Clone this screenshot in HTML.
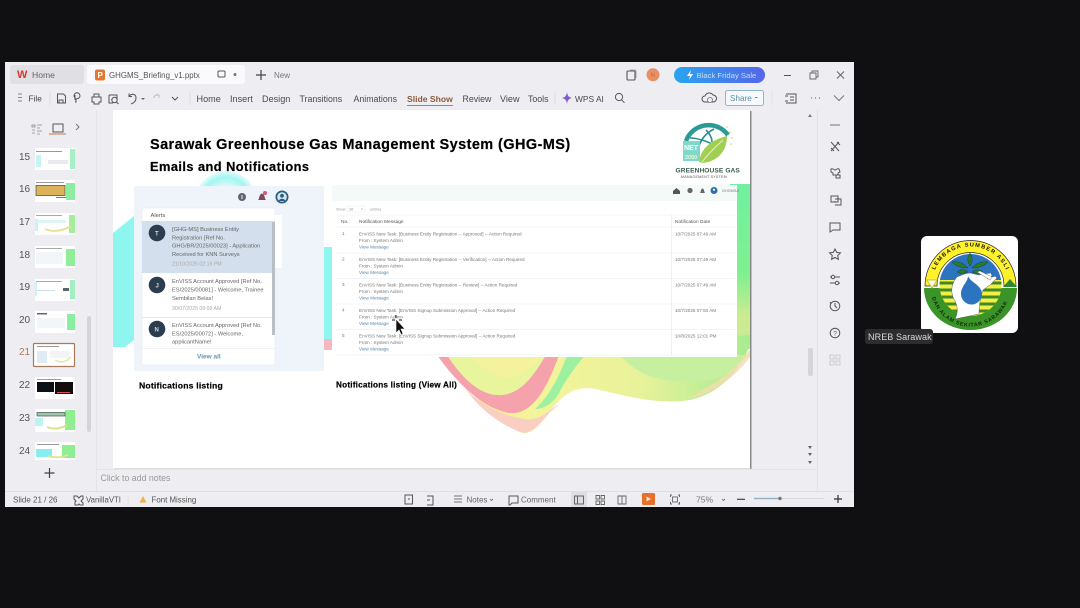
<!DOCTYPE html>
<html lang="en">
<head>
<meta charset="utf-8">
<title>GHGMS Briefing</title>
<style>
html,body{margin:0;padding:0;width:1080px;height:608px;overflow:hidden;background:#101013}
svg{display:block;position:absolute;left:0;top:0;filter:blur(.3px)}
text{font-family:"Liberation Sans",sans-serif}
.tb{font-size:9.1px;fill:#4a4a4a}
.ic{fill:none;stroke:#555;stroke-width:1}
.num{font-size:10px;fill:#555}
.msg{font-size:4.6px;fill:#777}
.lnk{font-size:4.6px;fill:#5b84a8}
.alert{font-size:5.7px;fill:#666}
.dt{font-size:5.2px;fill:#aaa}
.hd{font-weight:bold;fill:#000;stroke:#000;stroke-width:.2}
</style>
</head>
<body>
<svg width="1080" height="608" viewBox="0 0 1080 608" xmlns="http://www.w3.org/2000/svg">
<defs>
<linearGradient id="sale" x1="0" x2="1"><stop offset="0" stop-color="#2aa4f0"/><stop offset="1" stop-color="#5566e8"/></linearGradient>
<linearGradient id="grn" x1="0" x2="0" y1="0" y2="1"><stop offset="0" stop-color="#70f0a0"/><stop offset=".55" stop-color="#80f090"/><stop offset=".8" stop-color="#cdeb90"/><stop offset="1" stop-color="#c8e89a"/></linearGradient>
<linearGradient id="wave" x1="0" x2="1" y1="0" y2="0"><stop offset="0" stop-color="#f9e29a"/><stop offset=".3" stop-color="#f4f49a"/><stop offset=".65" stop-color="#e8f29a"/><stop offset="1" stop-color="#a8ec90"/></linearGradient>
<radialGradient id="cy"><stop offset=".45" stop-color="#e4fbfa"/><stop offset=".8" stop-color="#a2f6f1"/><stop offset="1" stop-color="#e4fcfb"/></radialGradient>
<clipPath id="slideClip"><rect x="113" y="110" width="637" height="358"/></clipPath>
<clipPath id="logoClip"><rect x="921" y="236" width="97" height="97" rx="6"/></clipPath>
<clipPath id="dd"><rect x="142" y="208" width="133" height="157" rx="2"/></clipPath>
<clipPath id="inner"><circle cx="970.500" cy="285" r="31"/></clipPath>
<path id="arcTop2" d="M935 270A38.500 38.500 0 0 1 1006 270" fill="none"/>
<path id="arcBot2" d="M932 297.500A40 40 0 0 0 1009 297.500" fill="none"/>
</defs>

<!-- window -->
<rect x="5" y="62" width="849" height="445" fill="#eeeef2"/>
<rect x="10" y="65" width="74" height="19" rx="3" fill="#dfdfe4"/>
<rect x="87" y="65" width="158" height="19" rx="3" fill="#fafafc"/>
<text x="17" y="78" font-size="11" font-weight="bold" fill="#d9372c">W</text>
<text x="32" y="78" font-size="8.600" fill="#666">Home</text>
<rect x="95" y="69.500" width="10" height="11" rx="2" fill="#e2792e"/>
<text x="97.500" y="78" font-size="8" font-weight="bold" fill="#fff">P</text>
<text x="109" y="78" font-size="7.900" fill="#555">GHGMS_Briefing_v1.pptx</text>
<rect x="218" y="71" width="7" height="6" rx="1" class="ic" stroke="#888"/>
<circle cx="235" cy="74.500" r="1.500" fill="#777"/>
<path d="M256 75h10M261 70v10" stroke="#444" stroke-width="1.200"/>
<text x="274" y="78" font-size="8" fill="#777">New</text>

<rect x="627" y="71" width="8" height="9" rx="1" fill="none" stroke="#555" stroke-width="1.100"/>
<path d="M630 70h5a1 1 0 0 1 1 1v7" fill="none" stroke="#999" stroke-width=".8"/>
<circle cx="653" cy="74.800" r="6.500" fill="#e88f66"/>
<text x="650.500" y="77" font-size="6" fill="#c96b46">N</text>
<rect x="674" y="67" width="91" height="16" rx="8" fill="url(#sale)"/>
<path d="M691 70l-4 6h3l-1 4 4-6h-3z" fill="#fff"/>
<text x="696.500" y="78" font-size="7.700" fill="#c9dcf2">Black Friday Sale</text>
<path d="M784 75.500h7" stroke="#555" stroke-width="1"/>
<path d="M810 73h6v6h-6zM812 73v-2h6v6h-2" fill="none" stroke="#666" stroke-width=".9"/>
<path d="M837 71.500l7 7M844 71.500l-7 7" stroke="#666" stroke-width="1"/>

<!-- toolbar -->
<path d="M18 94h4M18 97.500h4M18 101h4" stroke="#888" stroke-width=".9"/>
<text x="28.500" y="101.500" font-size="8.300" fill="#444">File</text>
<path d="M50 92v13" stroke="#ddd"/>
<path d="M57.500 94h6l2 2v7h-8zM59 103v-3h4v3" class="ic"/>
<path d="M75 98a3 3 0 1 1 4 0l-3 1v3h-1M75 95v5" class="ic"/>
<path d="M92 97h9v5h-2v2h-5v-2h-2zM94 97v-3h5v3" class="ic"/>
<path d="M109 95h8v4M109 95v8h4" class="ic"/><circle cx="114.500" cy="100" r="2.700" class="ic"/><path d="M116.500 102l2 2" class="ic"/>
<path d="M129 96c3-3 7-2 7 2s-3 5-5 6M129 93.500v3h3" class="ic"/>
<path d="M141 98l2 2 2-2" fill="#666"/>
<path d="M160 96c-3-2-6-1-6 2" fill="none" stroke="#bbb"/><path d="M157 93.500l3 2.500-2 2" fill="none" stroke="#ccc"/>
<path d="M172 97l3 3 3-3" class="ic"/>
<path d="M190 92v13" stroke="#ddd"/>
<g class="tb">
<text x="196.500" y="102">Home</text>
<text x="230" y="102">Insert</text>
<text x="262" y="102">Design</text>
<text x="299.500" y="102" font-size="8.800">Transitions</text>
<text x="353.500" y="102" font-size="8.800">Animations</text>
<text x="407" y="102" font-weight="bold" font-size="8.600" fill="#8e5a3c">Slide Show</text>
<text x="462.500" y="102" font-size="8.800">Review</text>
<text x="500" y="102">View</text>
<text x="528" y="102" font-size="8.800">Tools</text>
</g>
<rect x="407" y="105" width="46" height="1" fill="#c8764a"/>
<path d="M555 92v13" stroke="#ddd"/>
<path d="M567 92c.6 4 1.500 5 5 6-3.500 1-4.400 2-5 6-.6-4-1.500-5-5-6 3.500-1 4.400-2 5-6z" fill="#7d5bd0"/>
<text x="575" y="102" font-size="8.400" fill="#4a4a4a">WPS AI</text>
<circle cx="619" cy="97" r="3.600" class="ic"/><path d="M621.500 99.800l3 3" class="ic"/>
<path d="M705 102a3 3 0 0 1 0-6 4.500 4.500 0 0 1 8-1 3.500 3.500 0 0 1 0 7z" class="ic"/>
<circle cx="710" cy="100" r="2.500" fill="#eee" stroke="#666" stroke-width=".7"/>
<rect x="725.500" y="90.500" width="38" height="15" rx="2" fill="#f6f9fb" stroke="#8fb6cc"/>
<text x="730" y="101" font-size="8.200" fill="#5c8fa8">Share</text>
<path d="M755 97.500l2.500 0" stroke="#5c8fa8"/>
<path d="M772 92v13" stroke="#e2e2e6"/>
<path d="M786 94h10v9h-10M785 96h3M785 101h3M790 97h4M790 100h4" class="ic"/>
<path d="M811 98h1M815 98h1M819 98h1" stroke="#555" stroke-width="1"/>
<path d="M834 95.500l5 5 5-5" fill="none" stroke="#777" stroke-width="1"/>

<!-- left panel -->
<rect x="96" y="110" width="1" height="381" fill="#e4e4e8"/>
<path d="M32 125h3v2h-3zM32 130h3M32 133h3M37 125h5M37 128h3M37 131h5M37 134h3" stroke="#888" stroke-width=".8" fill="none"/>
<rect x="53" y="124" width="10" height="8" fill="none" stroke="#555"/>
<rect x="49" y="133.500" width="17" height="1" fill="#c8764a"/>
<path d="M76 124l3 3-3 3" fill="none" stroke="#777" stroke-width="1"/>
<rect x="87" y="316" width="4" height="116" rx="2" fill="#d4d4d8"/>

<g class="num">
<text x="19" y="160">15</text><text x="19" y="192">16</text><text x="19" y="225">17</text><text x="19" y="258">18</text><text x="19" y="290">19</text><text x="19" y="323">20</text><text x="19" y="355" fill="#a87a5c">21</text><text x="19" y="388">22</text><text x="19" y="421">23</text><text x="19" y="454">24</text>
</g>

<!-- thumbs -->
<g>
<rect x="35" y="148" width="40" height="22" fill="#fff"/><rect x="70" y="149" width="5" height="20" fill="#a8efc4"/><rect x="36" y="151" width="26" height="1" fill="#999"/><rect x="36" y="155" width="5" height="12" fill="#c6f3f3"/><rect x="48" y="160" width="20" height="4" fill="#e8eaee"/>
<rect x="35" y="180" width="40" height="22" fill="#fff"/><rect x="66" y="183" width="9" height="17" fill="#8ceca0"/><rect x="36" y="182" width="28" height="1" fill="#999"/><rect x="36" y="185.500" width="29" height="10" fill="#dcb25a" stroke="#554" stroke-width=".8"/><rect x="56" y="197" width="10" height="1" fill="#777"/>
<rect x="35" y="213" width="40" height="22" fill="#fff"/><rect x="69" y="215" width="6" height="18" fill="#a4ee9c"/><rect x="36" y="215" width="26" height="1" fill="#aaa"/><rect x="36" y="220" width="30" height="3" fill="#dff4f6"/><path d="M45 229q12 5 26 -3" stroke="#e6e29a" stroke-width="2" fill="none"/><rect x="35" y="219" width="3" height="12" fill="#c8f5f3"/>
<rect x="35" y="246" width="40" height="22" fill="#fff"/><rect x="66" y="249" width="9" height="17" fill="#90ee98"/><rect x="36" y="248" width="26" height="1" fill="#aaa"/><rect x="36" y="252" width="27" height="12" fill="#f3f6f9"/>
<rect x="35" y="279" width="40" height="22" fill="#fff"/><rect x="70" y="280" width="5" height="19" fill="#a4eec2"/><rect x="36" y="281" width="26" height="1" fill="#aaa"/><rect x="63" y="288" width="6" height="3" fill="#566"/><rect x="37" y="290" width="18" height="1" fill="#cde"/><rect x="35" y="282" width="2" height="14" fill="#c8f5f3"/>
<rect x="35" y="311" width="40" height="22" fill="#fff"/><rect x="67" y="314" width="8" height="16" fill="#8aeea0"/><rect x="37" y="313" width="10" height="1.500" fill="#666"/><rect x="37" y="318" width="28" height="10" fill="#f3f6f8"/>
<rect x="33.500" y="343.500" width="41" height="23" rx="1" fill="#fff" stroke="#a87a5c" stroke-width="1.200"/><rect x="37" y="346" width="22" height="1" fill="#999"/><rect x="37" y="351" width="10" height="12" fill="#e0ebf6"/><rect x="50" y="351" width="20" height="7" fill="#f4f4f6"/><path d="M55 360q8 5 16-3" stroke="#e7e8a0" stroke-width="1.500" fill="none"/>
<rect x="35" y="377" width="40" height="22" fill="#fff"/><rect x="37" y="382" width="17" height="10" fill="#0a1014"/><rect x="55" y="382" width="18" height="12" fill="#150d0d"/><rect x="37" y="379" width="24" height="1" fill="#999"/><rect x="57" y="392" width="13" height="1" fill="#c55"/>
<rect x="35" y="409" width="40" height="23" fill="#fff"/><rect x="65" y="410" width="10" height="20" fill="#90ee90"/><rect x="37" y="412.500" width="28" height="3.500" fill="#9fc6a8" stroke="#455" stroke-width=".7"/><rect x="35" y="418" width="8" height="8" fill="#bdf3f0"/><path d="M47 427q10 4 20-2" stroke="#dde08c" stroke-width="2" fill="none"/>
<rect x="35" y="442" width="40" height="18" fill="#fff"/><rect x="36" y="449" width="16" height="8" fill="#86eef0"/><rect x="62" y="445" width="13" height="13" fill="#8eee92"/><path d="M48 456q10 3 20-1" stroke="#dfe39a" stroke-width="2" fill="none"/><rect x="37" y="444" width="22" height="1" fill="#999"/>
</g>
<path d="M44.500 473h10M49.500 468v10" stroke="#444" stroke-width="1.200"/>

<!-- slide -->
<rect x="750" y="111" width="1.500" height="358" fill="#8a8a8a"/>
<rect x="114" y="468.500" width="637" height="1.500" fill="#bbb"/>
<rect x="113" y="110" width="637" height="358.500" fill="#fff"/>
<g clip-path="url(#slideClip)">
<circle cx="226" cy="202" r="31" fill="url(#cy)"/>
<path d="M113 233L134 216V340L125 347H113z" fill="#8ff5ef"/>
<rect x="324" y="247" width="8" height="92" fill="#8ff5ef"/>
<rect x="324" y="339" width="8" height="11" fill="#f6b8c0"/>
<rect x="730" y="184" width="21" height="165" fill="url(#grn)"/>
<path d="M437 355C470 395 490 412 520 432c15 7 27-20 40-32 12-12 25-14 40-10 25 6 60 15 90 10 30-6 50-30 60-55v-10z" fill="url(#wave)"/>
<path d="M437 355c20 28 45 53 72 58 25 3 40-30 50-58z" fill="#f5a2ac"/>
<path d="M447 355c16 25 35 42 55 40 20-2 32-20 44-40z" fill="#e8f59c"/>
<path d="M470 355c14 16 28 24 42 22 12-2 22-10 30-22z" fill="#f5f29e"/>
<path d="M567 355c-6 18-18 42-32 54 12 0 22-10 26-20 8-14 16-24 24-34z" fill="#9df0a0"/>
<path d="M620 355c20 24 50 30 90 25 20-4 30-14 40-28v3z" fill="#c6f0a0"/>
<path d="M520 432c10 4 20-8 30-20l10-8c-10 4-20 20-40 14-20-3-40-14-55-30 15 22 35 36 55 44z" fill="#f9cfc4"/>
<path d="M640 399c20 2 50 3 60-8 20-10 35-22 50-42v8c-15 20-35 35-55 40-20 4-40 4-55 2z" fill="#f4dcb0" opacity=".8"/>
</g>
<text x="150" y="149" class="hd" font-size="14.500" letter-spacing=".41">Sarawak Greenhouse Gas Management System (GHG-MS)</text>
<text x="150" y="171" class="hd" font-size="12.800" letter-spacing=".45">Emails and Notifications</text>

<!-- net logo -->
<path d="M686 141a24 24 0 0 1 42-6" fill="none" stroke="#2a9a94" stroke-width="4.500"/>
<path d="M698 150c2-10 8-17 16-21M690 138c8 0 20 4 30 10M706 130c4 4 6 8 6 12" fill="none" stroke="#2a8f90" stroke-width="1.600"/>
<path d="M699 162c2-14 12-22 28-26 0 14-8 25-24 27z" fill="#a0cf52"/>
<path d="M702 162c6-8 12-14 21-22" stroke="#e6f2c0" stroke-width="1" fill="none"/>
<rect x="683" y="141" width="17" height="20" fill="#7fd8c8"/>
<text x="684" y="150" font-size="7" font-weight="bold" fill="#fff">NET</text>
<text x="685" y="159" font-size="5.500" font-weight="bold" fill="#eaf7d0">2050</text>
<circle cx="730" cy="132" r=".8" fill="#d5cf60"/><circle cx="732" cy="138" r=".8" fill="#d5cf60"/><circle cx="731" cy="144" r=".8" fill="#d5cf60"/><circle cx="727" cy="127" r=".8" fill="#d5cf60"/>
<text x="675.500" y="172.500" font-size="6.600" font-weight="bold" fill="#3a5a4c" letter-spacing=".1">GREENHOUSE GAS</text>
<text x="681" y="178" font-size="3.700" fill="#555" letter-spacing=".2">MANAGEMENT SYSTEM</text>

<!-- left screenshot -->
<rect x="134" y="186" width="190" height="185" fill="#eff3fa"/>
<circle cx="242" cy="197" r="4" fill="#5c6670"/><rect x="241.500" y="195" width="1" height="4" fill="#eef"/>
<path d="M258 200c1.500-1 1-6 4-6.500 3 .5 2.500 5.500 4 6.500z" fill="#7a4a5e"/>
<circle cx="265" cy="193" r="2" fill="#d85a7a"/>
<circle cx="282" cy="197" r="6.500" fill="#2a5f80"/><circle cx="282" cy="197" r="4.800" fill="#d6e4ee"/><circle cx="282" cy="195.800" r="1.900" fill="#2a5f80"/><path d="M278.500 201c1-3 6-3 7 0" fill="#2a5f80"/>
<rect x="142" y="208" width="133" height="157" rx="2" fill="#fff" stroke="#e4e8ee" stroke-width=".5"/>
<rect x="275" y="215" width="7" height="53" fill="#fff"/>
<text x="150.500" y="217" font-size="5.800" fill="#555">Alerts</text>
<g clip-path="url(#dd)">
<rect x="142" y="221" width="133" height="52" fill="#d3dfec"/>
<rect x="142" y="317" width="133" height=".7" fill="#ddd"/>
<rect x="142" y="348" width="133" height=".7" fill="#eee"/>
<rect x="272" y="222" width="3" height="113" fill="#b9bfc6"/>
<circle cx="157" cy="233" r="8.300" fill="#2d3d50"/><text x="155" y="235.500" font-size="6" fill="#cdd" font-weight="bold">T</text>
<circle cx="157" cy="285" r="8.300" fill="#2d3d50"/><text x="155.500" y="287.500" font-size="6" fill="#cdd" font-weight="bold">J</text>
<circle cx="157" cy="329" r="8.300" fill="#2d3d50"/><text x="154.500" y="331.500" font-size="6" fill="#cdd" font-weight="bold">N</text>
<g class="alert">
<text x="172" y="231">[GHG-MS] Business Entity</text>
<text x="172" y="239.500">Registration [Ref No.</text>
<text x="172" y="247.500">GHG/BR/2025/00023] - Application</text>
<text x="172" y="256">Received for KNN Surveys</text>
<text x="172" y="283">EnVISS Account Approved [Ref No.</text>
<text x="172" y="291.500">ES/2025/00081] - Welcome, Trainee</text>
<text x="172" y="300">Sembilan Belas!</text>
<text x="172" y="327">EnVISS Account Approved [Ref No.</text>
<text x="172" y="335.500">ES/2025/00072] - Welcome,</text>
<text x="172" y="343.500">applicantName!</text>
</g>
<text x="172" y="265.500" class="dt">21/10/2025 02:19 PM</text>
<text x="172" y="310" class="dt">30/07/2025 09:09 AM</text>
</g>
<text x="197" y="358.500" font-size="6.500" font-weight="bold" fill="#6a93ac">View all</text>
<text x="139" y="388.500" class="hd" font-size="8.600" letter-spacing=".2">Notifications listing</text>

<!-- right screenshot -->
<rect x="332" y="185" width="405" height="172" fill="#fff"/>
<rect x="332" y="185" width="405" height="16" fill="#f4faf8"/>
<path d="M673 191l3.500-3 3.500 3v3h-7z" fill="#555"/>
<circle cx="690" cy="190.500" r="2.600" fill="#666"/>
<path d="M700 193c1-1 .5-4 2.500-4.500 2 .5 1.500 3.500 2.500 4.500z" fill="#666"/>
<circle cx="714" cy="190.500" r="3.500" fill="#2a6fa0"/><circle cx="714" cy="189.800" r="1.200" fill="#dfeaf4"/>
<text x="722" y="192" font-size="3.800" fill="#777">GHGMSA</text>
<text x="336" y="210.500" font-size="3.800" fill="#999">Show</text>
<rect x="347" y="206" width="18" height="6" fill="#fff" stroke="#eee" stroke-width=".5"/>
<text x="349" y="210.500" font-size="3.800" fill="#888">10</text><path d="M361 208.500l1 1 1-1" stroke="#888" fill="none" stroke-width=".5"/>
<text x="370" y="210.500" font-size="3.800" fill="#999">entries</text>
<path d="M336 215h399M336 227h399M336 253h399M336 278.500h399M336 304h399M336 329.500h399M336 355h399" stroke="#eff1f4" stroke-width=".7"/>
<path d="M671.500 215v140" stroke="#e6e8ec" stroke-width=".7"/>
<text x="341" y="223" font-size="4.800" fill="#555">No.</text>
<text x="359" y="223" font-size="4.800" fill="#555">Notification Message</text>
<text x="675" y="223" font-size="4.800" fill="#555">Notification Date</text>
<g class="msg">
<text x="342" y="235">1</text><text x="359" y="235.500">EnVISS New Task: [Business Entity Registration -- Approved] -- Action Required</text><text x="359" y="242">From : System Admin</text>
<text x="342" y="260.500">2</text><text x="359" y="261">EnVISS New Task: [Business Entity Registration -- Verification] -- Action Required</text><text x="359" y="267.500">From : System Admin</text>
<text x="342" y="286">3</text><text x="359" y="286.500">EnVISS New Task: [Business Entity Registration -- Review] -- Action Required</text><text x="359" y="293">From : System Admin</text>
<text x="342" y="311.500">4</text><text x="359" y="312">EnVISS New Task: [EnVISS Signup Submission Approval] -- Action Required</text><text x="359" y="318.500">From : System Admin</text>
<text x="342" y="337">5</text><text x="359" y="337.500">EnVISS New Task: [EnVISS Signup Submission Approval] -- Action Required</text><text x="359" y="344">From : System Admin</text>
<text x="675" y="235.500">10/7/2025 07:49 AM</text><text x="675" y="261">10/7/2025 07:49 AM</text><text x="675" y="286.500">10/7/2025 07:49 AM</text><text x="675" y="312">10/7/2025 07:50 AM</text><text x="675" y="337.500">10/8/2025 12:01 PM</text>
</g>
<g class="lnk">
<text x="359" y="248.500">View Message</text><text x="359" y="274">View Message</text><text x="359" y="299.500">View Message</text><text x="359" y="325">View Message</text><text x="359" y="350.500">View Message</text>
</g>
<text x="336" y="387.500" class="hd" font-size="8.200" letter-spacing=".2">Notifications listing (View All)</text>

<!-- cursor -->
<path d="M396 319v14l3-3 2 4.500 2-1-2-4.500h4z" fill="#111" stroke="#fff" stroke-width=".6"/>
<path d="M392 320h3M399 320h3M396 315v3" stroke="#111" stroke-width="1"/>

<!-- slide scrollbars -->
<path d="M810 114l2 3h-4z" fill="#777"/>
<rect x="808" y="348" width="5" height="28" rx="2" fill="#d6d6da"/>
<path d="M810 449l-2-3h4zM810 456l-2-3h4zM810 464l-2-3h4z" fill="#666"/>
<rect x="817" y="110" width="1" height="381" fill="#e2e2e6"/>
<rect x="96" y="469" width="721" height="1" fill="#e4e4e8"/>
<text x="100.500" y="481" font-size="8.800" fill="#999">Click to add notes</text>
<rect x="5" y="491" width="849" height="1" fill="#e0e0e4"/>

<!-- right rail -->
<path d="M830 125h10" stroke="#888" stroke-width="1.200"/>
<path d="M831 142l8 9M839 142l-8 9M837 142l3 3M831 148l3 3" class="ic" stroke-width="1.200"/>
<path d="M831 169c2-1 3 1 4 1s2-2 4-1l1 3-2 1v2h-5v-2l-2-1zM836 175h4v3h-4z" class="ic"/>
<path d="M831 196h7v6h-7zM835 202v-1M835 199h6v6h-6" class="ic"/>
<path d="M830 223h10v7h-7l-3 2z" class="ic"/>
<path d="M835 249l1.700 3.400 3.800.5-2.800 2.600.7 3.800-3.400-1.800-3.400 1.800.7-3.800-2.800-2.600 3.800-.5z" class="ic"/>
<path d="M830 277h10M830 283h10" class="ic"/><circle cx="833" cy="277" r="1.700" fill="#eeeef2" stroke="#555"/><circle cx="837" cy="283" r="1.700" fill="#eeeef2" stroke="#555"/>
<circle cx="835" cy="306" r="4.800" class="ic"/><path d="M835 303v3l2 2M830 302l1 2" class="ic"/>
<circle cx="835" cy="333" r="4.800" class="ic"/><text x="833.300" y="335.500" font-size="6.500" fill="#555">?</text>
<path d="M830 355h4v4h-4zM836 355h4v4h-4zM830 361h4v4h-4zM836 361h4v4h-4z" fill="none" stroke="#ccc"/>

<!-- status bar -->
<text x="13" y="502.500" font-size="8" fill="#555">Slide 21 / 26</text>
<path d="M74 496h3l2 2 2-2h2v3l-2 2 2 2v2h-3l-1-1-1 1h-3v-3l1-1-2-2z" class="ic" stroke-width=".8"/>
<text x="86" y="502.500" font-size="7.800" fill="#555">VanillaVTI</text>
<path d="M128 495v11" stroke="#eedcd8"/>
<path d="M143 496l3.500 6.500h-7z" fill="#f0b04a"/>
<text x="151.500" y="502.500" font-size="7.900" fill="#555">Font Missing</text>
<rect x="405" y="495" width="7.500" height="9" fill="none" stroke="#555"/><path d="M408 499h2" stroke="#555"/>
<path d="M427 496h6v9h-6M427 500h3" class="ic"/>
<path d="M454 496h8M454 499h8M454 502h8" stroke="#777" stroke-width=".9"/>
<text x="466.500" y="502.500" font-size="8" fill="#666">Notes</text>
<path d="M490 499l1.500 1.500 1.500-1.500" stroke="#666" fill="none" stroke-width=".8"/>
<path d="M509 496h9v7h-6l-2 2h-1z" class="ic"/>
<text x="521" y="502.500" font-size="8" fill="#666">Comment</text>
<rect x="571" y="492" width="16" height="15" fill="#dedee2"/>
<rect x="574.500" y="496" width="9" height="8" fill="none" stroke="#666"/><path d="M577.500 496v8" stroke="#666"/>
<path d="M596 495.500h3.500v3.500h-3.500zM601 495.500h3.500v3.500h-3.500zM596 501h3.500v3.500h-3.500zM601 501h3.500v3.500h-3.500z" fill="none" stroke="#666" stroke-width=".9"/>
<path d="M618 496h4v8h-4zM622 496h4v8h-4" fill="none" stroke="#666" stroke-width=".9"/>
<rect x="642" y="493" width="13" height="12" rx="1.500" fill="#e8702c"/><path d="M646.500 496.500l4.500 2.500-4.500 2.500z" fill="#ffe6c0"/>
<path d="M672 495h-1.500v2M678 495h1.500v2M672 504h-1.500v-2M678 504h1.500v-2" fill="none" stroke="#666"/><rect x="672.500" y="497" width="5" height="5" fill="none" stroke="#666" stroke-width=".9"/>
<text x="696" y="502.500" font-size="8.500" fill="#777">75%</text>
<path d="M722 499l1.500 1.500 1.500-1.500" stroke="#666" fill="none" stroke-width=".8"/>
<path d="M737 499.300h8" stroke="#444" stroke-width="1.200"/>
<rect x="754" y="498" width="70" height="1" fill="#d6dade"/>
<rect x="754" y="497.800" width="25" height="1.400" fill="#8fb0c4"/>
<circle cx="780" cy="498.500" r="1.700" fill="#777"/>
<path d="M834 499h8M838 495v8" stroke="#333" stroke-width="1.200"/>

<!-- participant tile -->
<g clip-path="url(#logoClip)">
<rect x="921" y="236" width="97" height="97" fill="#fff"/>
<path d="M925 286a45.500 45.500 0 0 1 91 0l-12 0a33.500 33.500 0 0 0-67 0z" fill="#fff22a" stroke="#222" stroke-width=".7"/>
<path d="M924 288h93a46.500 42 0 0 1-93 0z" fill="#3a9428"/>
<g clip-path="url(#inner)">
<rect x="938" y="252" width="66" height="28" fill="#2c74c0"/>
<rect x="938" y="280" width="66" height="36" fill="#f6ef40"/>
<path d="M938 283h66M938 290h66M938 297h66M938 304h66M938 311h66" stroke="#3d8a2c" stroke-width="3"/>
</g>
<path d="M927 280h10l-5 8z" fill="#fff" stroke="#c9c020" stroke-width=".9"/>
<path d="M1003 287l7-8 7 8z" fill="#2e8a34"/>
<path d="M970 266c-3-5-3-9 0-13 3 4 3 8 0 13zM968 268c-6 0-13-2-16-6 6-1 12 1 16 6zM972 268c6 0 13-2 16-6-6-1-12 1-16 6zM968 272c-4 2-8 2-11 0 3-3 8-3 11 0zM972 272c4 2 8 2 11 0-3-3-8-3-11 0z" fill="#2b7a28" stroke="#123" stroke-width=".3"/>
<path d="M957 277c5-2 9-4 13-4l9 2 4-1 8-1 1 3-5 3 8-3 2 2-6 6-8 6c-3 8-4 17-4 24l-24 5c3-6 3-12 0-18-5-8-4-17 2-24z" fill="#fff" stroke="#444" stroke-width=".4"/>
<path d="M968 276c0 6-7 10-7 18a10.500 10.500 0 0 0 21 0c0-9-11-11-14-18z" fill="#2c74c0"/>
<path d="M977 272l3-1 12 6-2 3z" fill="#fff" stroke="#555" stroke-width=".4"/>
<text font-size="5.600" font-weight="bold" fill="#111" letter-spacing="1.200"><textPath href="#arcTop2">LEMBAGA SUMBER ASLI</textPath></text>
<text font-size="5.400" font-weight="bold" fill="#0c2c0a" letter-spacing=".7"><textPath href="#arcBot2">DAN ALAM SEKITAR SARAWAK</textPath></text>
</g>
<rect x="865" y="329" width="68" height="15" rx="3" fill="#2c2c2e"/>
<text x="868" y="340" font-size="9" fill="#d8d8d8" letter-spacing=".1">NREB Sarawak</text>
</svg>
</body>
</html>
